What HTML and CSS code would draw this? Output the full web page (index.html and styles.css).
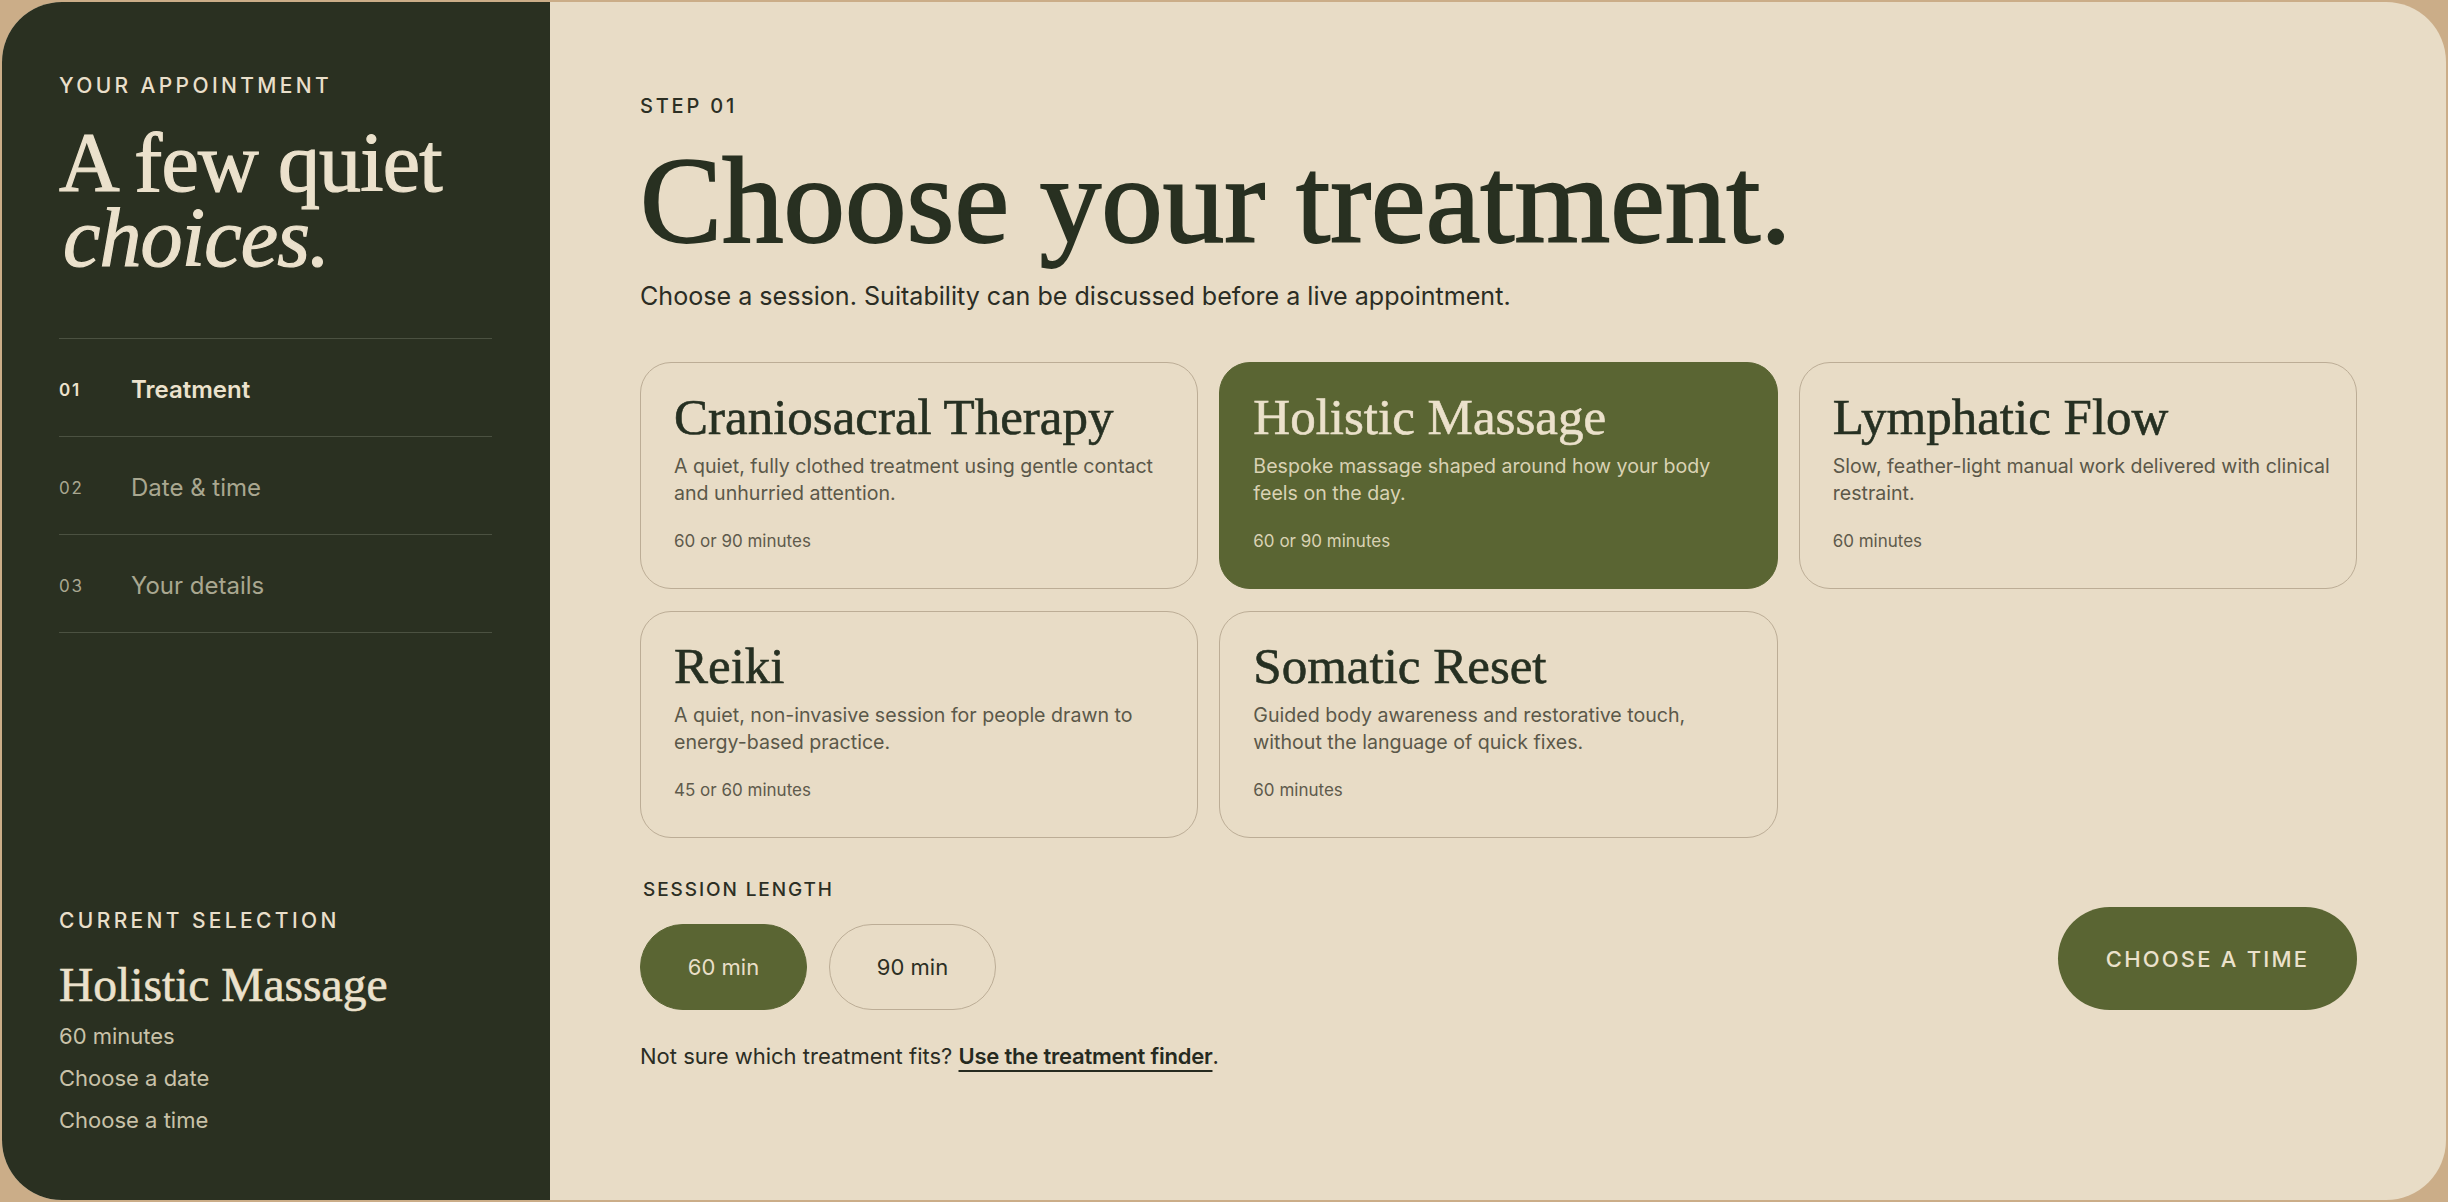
FILE: index.html
```html
<!DOCTYPE html>
<html lang="en">
<head>
<meta charset="utf-8">
<title>Choose your treatment</title>
<link rel="stylesheet" href="styles.css">
</head>
<body>
<div class="frame">
  <aside class="sidebar">
    <div class="side-top">
      <p class="eyebrow">YOUR APPOINTMENT</p>
      <h2 class="side-title"><span class="line">A few quiet</span><em class="line">choices.</em></h2>
      <ol class="steps">
        <li class="step active"><span class="num">01</span><span class="label">Treatment</span></li>
        <li class="step"><span class="num">02</span><span class="label">Date &amp; time</span></li>
        <li class="step"><span class="num">03</span><span class="label">Your details</span></li>
      </ol>
    </div>
    <div class="side-bottom">
      <p class="eyebrow">CURRENT SELECTION</p>
      <h3 class="sel-title">Holistic Massage</h3>
      <p class="sel-line">60 minutes</p>
      <p class="sel-line">Choose a date</p>
      <p class="sel-line">Choose a time</p>
    </div>
  </aside>
  <main class="main">
    <p class="step-label">STEP 01</p>
    <h1 class="headline">Choose your treatment.</h1>
    <p class="intro">Choose a session. Suitability can be discussed before a live appointment.</p>
    <div class="cards">
      <div class="card">
        <h4 class="card-title">Craniosacral Therapy</h4>
        <p class="card-desc">A quiet, fully clothed treatment using gentle contact and unhurried attention.</p>
        <p class="card-dur">60 or 90 minutes</p>
      </div>
      <div class="card selected">
        <h4 class="card-title">Holistic Massage</h4>
        <p class="card-desc">Bespoke massage shaped around how your body feels on the day.</p>
        <p class="card-dur">60 or 90 minutes</p>
      </div>
      <div class="card">
        <h4 class="card-title">Lymphatic Flow</h4>
        <p class="card-desc">Slow, feather-light manual work delivered with clinical restraint.</p>
        <p class="card-dur">60 minutes</p>
      </div>
      <div class="card">
        <h4 class="card-title">Reiki</h4>
        <p class="card-desc">A quiet, non-invasive session for people drawn to energy-based practice.</p>
        <p class="card-dur">45 or 60 minutes</p>
      </div>
      <div class="card">
        <h4 class="card-title">Somatic Reset</h4>
        <p class="card-desc">Guided body awareness and restorative touch,<br>without the language of quick fixes.</p>
        <p class="card-dur">60 minutes</p>
      </div>
    </div>
    <div class="options">
      <div class="length">
        <p class="length-label">SESSION LENGTH</p>
        <div class="pills">
          <span class="pill on">60 min</span>
          <span class="pill">90 min</span>
        </div>
      </div>
      <span class="cta">CHOOSE A TIME</span>
    </div>
    <p class="finder">Not sure which treatment fits? <a href="#" class="finder-link">Use the treatment finder</a>.</p>
  </main>
</div>
</body>
</html>
```

FILE: styles.css
```css
* { box-sizing: border-box; }

html, body {
  margin: 0;
  height: 100%;
}

body {
  background: #cbad88;
  padding: 2px;
  font-family: Inter, "Liberation Sans", sans-serif;
  overflow: hidden;
}

p, h1, h2, h3, h4, ol { margin: 0; padding: 0; }

.frame {
  height: calc(100vh - 4px);
  display: flex;
  border-radius: 60px;
  overflow: hidden;
  background: #e8dcc6;
}

/* Sidebar */
.sidebar {
  width: 548px;
  flex: none;
  background: #2a3021;
  color: #e9dfca;
  padding: 71px 58px 59px 57px;
  display: flex;
  flex-direction: column;
  justify-content: space-between;
}

.eyebrow {
  font-size: 21px;
  line-height: 26px;
  font-weight: 500;
  letter-spacing: 0.16em;
  color: #e9dfca;
}

.side-title {
  margin-top: 26px;
  font-family: "Liberation Serif", serif;
  font-weight: 400;
  font-size: 84px;
  letter-spacing: -0.01em;
  color: #ebe1cc;
  -webkit-text-stroke: 1.2px #ebe1cc;
}

.side-title .line {
  display: block;
  height: 75px;
  line-height: 75px;
}

.side-title em {
  font-style: italic;
  padding-left: 4px;
}

.steps {
  list-style: none;
  margin-top: 63px;
  border-top: 1px solid #4b5141;
}

.step {
  height: 98px;
  display: flex;
  align-items: center;
  border-bottom: 1px solid #4b5141;
  color: #a9a790;
  padding-top: 4px;
}

.step .num {
  width: 72px;
  font-size: 17px;
  letter-spacing: 0.1em;
}

.step .label {
  font-size: 24px;
}

.step.active { color: #ece2cd; }
.step.active .num { font-weight: 600; }
.step.active .label { font-weight: 600; }

.sel-title {
  margin-top: 25px;
  font-family: "Liberation Serif", serif;
  font-weight: 400;
  font-size: 47.5px;
  line-height: 52px;
  color: #ebe1cc;
  -webkit-text-stroke: 0.6px #ebe1cc;
}

.sel-line {
  font-size: 22px;
  line-height: 42px;
  color: #c9c2a9;
}

.sel-title + .sel-line { margin-top: 4px; }

/* Main */
.main {
  flex: 1;
  padding: 92px 89px 0 90px;
  color: #2a3021;
}

.step-label {
  font-size: 20px;
  line-height: 24px;
  font-weight: 500;
  letter-spacing: 0.14em;
  color: #2c2f24;
}

.headline {
  margin-top: 22px;
  font-family: "Liberation Serif", serif;
  font-weight: 400;
  font-size: 123px;
  line-height: 122px;
  letter-spacing: 0;
  color: #283021;
  -webkit-text-stroke: 1.8px #283021;
}

.intro {
  margin-top: 18px;
  font-size: 25.1px;
  line-height: 32px;
  color: #2b2d24;
}

.cards {
  margin-top: 50px;
  display: grid;
  grid-template-columns: repeat(3, 1fr);
  gap: 22px 21px;
}

.card {
  height: 227px;
  border: 1.5px solid #bcad96;
  border-radius: 31px;
  padding: 26px 18px 0 33px;
  color: #2a3021;
}

.card-title {
  font-family: "Liberation Serif", serif;
  font-weight: 400;
  font-size: 51px;
  line-height: 56px;
  color: #263022;
  -webkit-text-stroke: 0.6px #263022;
}

.card-desc {
  margin-top: 8px;
  font-size: 19.6px;
  line-height: 27px;
  color: #5b5849;
}

.card-dur {
  margin-top: 22px;
  font-size: 17px;
  line-height: 24px;
  color: #5e5a4c;
}

.card.selected {
  background: #5a6533;
  border-color: #5a6533;
}

.card.selected .card-title { color: #ebe1cb; -webkit-text-stroke-color: #ebe1cb; }
.card.selected .card-desc { color: #d9d2b4; }
.card.selected .card-dur { color: #d9d2b4; }

.options {
  margin-top: 40px;
  display: flex;
  justify-content: space-between;
  align-items: flex-end;
}

.length-label {
  padding-left: 3px;
  font-size: 19px;
  line-height: 24px;
  font-weight: 500;
  letter-spacing: 0.1em;
  color: #2c2f24;
}

.pills {
  margin-top: 22px;
  display: flex;
  gap: 22px;
}

.pill {
  width: 167px;
  height: 86px;
  border-radius: 43px;
  border: 1.5px solid #bcad96;
  display: flex;
  align-items: center;
  justify-content: center;
  font-size: 22px;
  color: #2c2f24;
}

.pill.on {
  background: #5a6533;
  border-color: #5a6533;
  color: #e9dfc8;
}

.cta {
  width: 299px;
  height: 103px;
  border-radius: 52px;
  background: #5a6533;
  color: #ebe1cb;
  display: flex;
  align-items: center;
  justify-content: center;
  font-size: 22px;
  font-weight: 500;
  letter-spacing: 0.1em;
}

.finder {
  margin-top: 31px;
  font-size: 22px;
  line-height: 30px;
  color: #2b2d24;
}

.finder-link {
  color: #262a1f;
  font-weight: 600;
  letter-spacing: -0.01em;
  text-decoration: underline;
  text-decoration-thickness: 2px;
  text-underline-offset: 6px;
}
```
